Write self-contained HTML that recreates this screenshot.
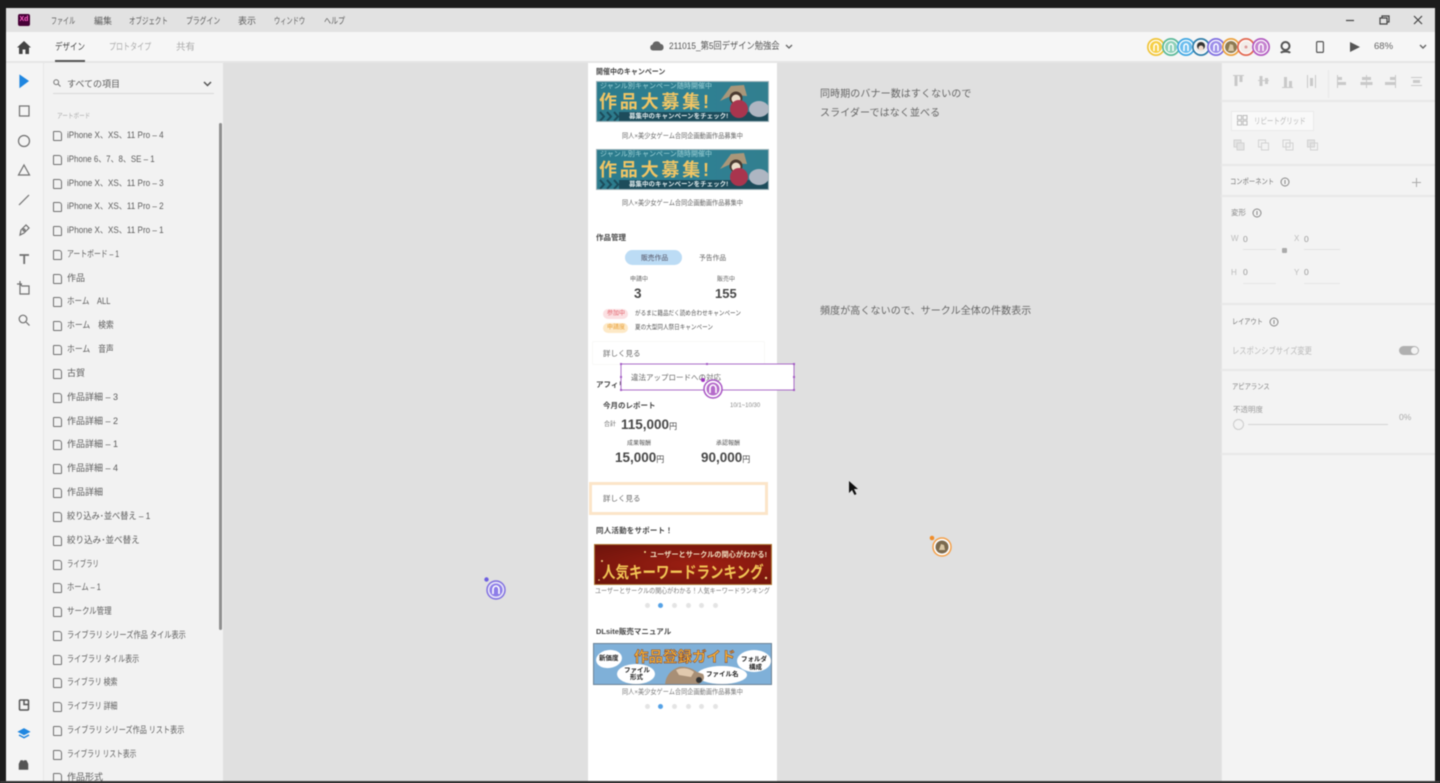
<!DOCTYPE html>
<html lang="ja"><head><meta charset="utf-8">
<style>
*{box-sizing:border-box}
html,body{margin:0;padding:0;width:1440px;height:783px;overflow:hidden;background:#1c1c1c}
body{font-family:"Liberation Sans","Noto Sans CJK JP",sans-serif;color:#5c5c5c}
#w{position:absolute;left:0;top:0;width:1440px;height:783px;overflow:hidden;filter:blur(.5px)}
.a{position:absolute}
.t{position:absolute;white-space:nowrap;line-height:14px;height:14px;transform-origin:left center}
.li{position:absolute;left:67px;font-size:9px;line-height:14px;color:#5c5c5c;white-space:nowrap}
.li:before{content:"";position:absolute;left:-14px;top:3px;width:7px;height:8px;border:1px solid #707070;border-top-right-radius:3px;border-radius:1px 3px 1px 1px}
.li u{display:inline-block;text-decoration:none;transform-origin:left center}
.b{font-weight:700;color:#484848}
svg{position:absolute;overflow:visible}
.dots{position:absolute;height:5px}
.dots i{position:absolute;top:0;width:5px;height:5px;border-radius:50%;background:#e4e4e4}
.dots i.on{background:#56a2e6}
.hl{position:absolute;height:2px;background:#e8e8e8;left:1221px;width:214px}
.banner{position:absolute;left:596px;width:173px;height:41px;background:linear-gradient(90deg,#2c7b8c,#2f8093 60%,#327f8f);overflow:hidden;border:1px solid #9fb4bb}
.banner .top{position:absolute;left:3px;top:0;font-size:7px;line-height:10px;letter-spacing:.05px;color:#9fd3d8;white-space:nowrap}
.banner .big{position:absolute;left:2px;top:9px;font-size:18px;line-height:22px;font-weight:700;letter-spacing:2.8px;color:#efc565;white-space:nowrap}
.banner .bar{position:absolute;left:22px;bottom:0;width:151px;height:9px;background:#1d4c5b}
.banner .chev{position:absolute;left:1px;bottom:0;width:24px;height:9px}
.banner .sub{position:absolute;left:32px;bottom:0;font-size:6.500px;line-height:9px;color:#dfeaec;font-weight:700;white-space:nowrap}
.banner .girl{position:absolute;left:122px;top:1px;width:50px;height:38px}
</style></head><body><div id="w">

<!-- chrome -->
<div class="a" style="left:6px;top:8px;width:1429px;height:24px;background:#e2e2e2"></div>
<div class="a" style="left:6px;top:32px;width:1429px;height:30px;background:#f6f6f6"></div>
<div class="a" style="left:6px;top:61px;width:1429px;height:2px;background:#e6e6e6"></div>
<div class="a" style="left:6px;top:63px;width:37px;height:718px;background:#f4f4f4"></div>
<div class="a" style="left:43px;top:63px;width:180px;height:718px;background:#f2f2f2;border-left:1px solid #e6e6e6"></div>
<div class="a" style="left:223px;top:63px;width:998px;height:718px;background:#e0e0e0"></div>
<div class="a" style="left:1221px;top:63px;width:214px;height:718px;background:#f3f3f3"></div>

<!-- title bar -->
<div class="a" style="left:18px;top:14px;width:12px;height:12px;background:#470137;border-radius:2px;color:#ff61c8;font-size:7px;line-height:12px;text-align:center;font-weight:700">Xd</div>
<span class="t" style="left:51px;top:14px;font-size:9px;transform:scaleX(.67)">ファイル</span>
<span class="t" style="left:94px;top:14px;font-size:9px">編集</span>
<span class="t" style="left:129px;top:14px;font-size:9px;transform:scaleX(.72)">オブジェクト</span>
<span class="t" style="left:186px;top:14px;font-size:9px;transform:scaleX(.76)">プラグイン</span>
<span class="t" style="left:238px;top:14px;font-size:9px">表示</span>
<span class="t" style="left:274px;top:14px;font-size:9px;transform:scaleX(.69)">ウィンドウ</span>
<span class="t" style="left:324px;top:14px;font-size:9px;transform:scaleX(.78)">ヘルプ</span>
<svg style="left:1340px;top:12px" width="90" height="16" fill="none" stroke="#444" stroke-width="1.200"><path d="M6 8.500h8"/><path d="M40 6h7v6h-7zM42 6V4h7v6h-2"/><path d="M74 4l8 8M82 4l-8 8"/></svg>

<!-- tool bar -->
<svg style="left:17px;top:41px" width="14" height="13" fill="#444"><path d="M7 0L0 6.500h2V13h3.600V8.500h2.800V13H12V6.500h2z"/></svg>
<span class="t" style="left:55px;top:41px;font-size:9.500px;color:#444;transform:scaleX(.79)">デザイン</span>
<div class="a" style="left:55px;top:60px;width:30px;height:2px;background:#555"></div>
<span class="t" style="left:109px;top:41px;font-size:9.500px;color:#aaa;transform:scaleX(.74)">プロトタイプ</span>
<span class="t" style="left:176px;top:41px;font-size:9.500px;color:#aaa">共有</span>
<svg style="left:650px;top:41px" width="14" height="10" fill="#666"><path d="M3 9.500a3 3 0 0 1-.5-5.900A4.300 4.300 0 0 1 10.600 3 3.300 3.300 0 0 1 11 9.500z"/></svg>
<span class="t" style="left:669px;top:40px;font-size:9.500px;color:#555;transform:scaleX(.87)">211015_第5回デザイン勉強会</span>
<svg style="left:785px;top:44px" width="8" height="6" fill="none" stroke="#666" stroke-width="1.300"><path d="M1 1l3 3 3-3"/></svg>

<!-- collaborators -->
<svg style="left:1146px;top:37px" width="126" height="20" viewBox="0 0 126 20">
 <g stroke="none">
  <circle cx="10" cy="10" r="9" fill="#f0c437"/><circle cx="10" cy="10" r="7.300" fill="#fff"/><circle cx="10" cy="10" r="6" fill="#f6cf45"/>
  <circle cx="25" cy="10" r="9" fill="#59b897"/><circle cx="25" cy="10" r="7.300" fill="#fff"/><circle cx="25" cy="10" r="6" fill="#8dd0b8"/>
  <circle cx="40" cy="10" r="9" fill="#3fa6e2"/><circle cx="40" cy="10" r="7.300" fill="#fff"/><circle cx="40" cy="10" r="6" fill="#6bbdee"/>
  <circle cx="55" cy="10" r="9" fill="#2f7da8"/><circle cx="55" cy="10" r="7.300" fill="#fff"/><circle cx="55" cy="10" r="6" fill="#eee"/>
  <circle cx="70" cy="10" r="9" fill="#7e6de0"/><circle cx="70" cy="10" r="7.300" fill="#fff"/><circle cx="70" cy="10" r="6" fill="#9c8eea"/>
  <circle cx="85" cy="10" r="9" fill="#eba13d"/><circle cx="85" cy="10" r="7.300" fill="#fff"/><circle cx="85" cy="10" r="6" fill="#8d7a52"/>
  <circle cx="100" cy="10" r="9" fill="#e2674f"/><circle cx="100" cy="10" r="7.300" fill="#fff"/><circle cx="100" cy="10" r="6" fill="#f3ece8"/>
  <circle cx="115" cy="10" r="9" fill="#b25ac0"/><circle cx="115" cy="10" r="7.300" fill="#fff"/><circle cx="115" cy="10" r="6" fill="#c583d0"/>
 </g>
 <g fill="none" stroke="#fff" stroke-width="1.500">
  <path d="M8 14v-4.500a2 2.500 0 0 1 4 0V14"/><path d="M23 14v-4.500a2 2.500 0 0 1 4 0V14"/><path d="M38 14v-4.500a2 2.500 0 0 1 4 0V14"/><path d="M68 14v-4.500a2 2.500 0 0 1 4 0V14"/><path d="M113 14v-4.500a2 2.500 0 0 1 4 0V14"/>
 </g>
 <circle cx="55" cy="9" r="4" fill="#333"/><circle cx="55" cy="11" r="2.500" fill="#f1d9c8"/>
 <path d="M82 14l2-7 3 1 1 6z" fill="#d9c7a5"/><circle cx="100" cy="10" r="1.500" fill="#d99"/>
</svg>
<svg style="left:1279px;top:40px" width="14" height="14" fill="none" stroke="#555" stroke-width="2"><circle cx="6.500" cy="6" r="4"/><path d="M2 13c1-2 8-2 9 0"/></svg>
<svg style="left:1316px;top:41px" width="8" height="12" fill="none" stroke="#555" stroke-width="1.200"><rect x=".6" y=".6" width="6.800" height="10.800" rx="1.200"/></svg>
<svg style="left:1350px;top:41px" width="10" height="12" fill="#555"><path d="M0 1l10 5-10 5z"/></svg>
<span class="t" style="left:1374px;top:40px;font-size:9.500px;color:#666">68%</span>
<svg style="left:1419px;top:44px" width="8" height="6" fill="none" stroke="#666" stroke-width="1.400"><path d="M1 1l3 3 3-3"/></svg>

<!-- tool rail -->
<svg style="left:14px;top:70px" width="20" height="270" fill="none" stroke="#707070" stroke-width="1.200">
 <path d="M6 5.500l8 5.500-8 6z" fill="#1f86e0" stroke="#1f86e0"/>
 <rect x="5.500" y="36" width="9.500" height="10" />
 <circle cx="10" cy="71" r="5.500"/>
 <path d="M10 95l5.500 10h-11z"/>
 <path d="M5 135l10-10"/>
 <path d="M6 165l1-5 5-5 3 3-5 5z"/><circle cx="10" cy="160" r="1"/>
 <path d="M5.500 185h9.500M10.200 185v9" stroke-width="1.800"/>
 <path d="M6 214v10h9v-8h-7zM3 214h5M6 211v5"/>
 <circle cx="9" cy="249" r="3.800"/><path d="M12 252l3.500 3.500"/>
</svg>
<svg style="left:16px;top:697px" width="16" height="75" fill="none" stroke="#555" stroke-width="1.500">
 <rect x="3.500" y="3" width="9" height="10" rx="1"/><path d="M8 3v4.500h4.500" />
 <path d="M8 32l5 2.700-5 2.700-5-2.700z" fill="#1f86e0" stroke="#1f86e0"/><path d="M3 38l5 2.700 5-2.700" stroke="#1f86e0"/>
 <path d="M3.500 72v-5l1.500-3h1.500l1 2 1-2h1.500l1.500 3v5z" fill="#555"/>
</svg>

<!-- left panel -->
<svg style="left:53px;top:79px" width="8" height="8" fill="none" stroke="#777"><circle cx="3.200" cy="3.200" r="2.400"/><path d="M5 5l2.500 2.500"/></svg>
<span class="t" style="left:67px;top:77px;font-size:9px">すべての項目</span>
<svg style="left:203px;top:81px" width="9" height="6" fill="none" stroke="#555" stroke-width="1.500"><path d="M1 1l3.500 3.500L8 1"/></svg>
<div class="a" style="left:53px;top:93px;width:161px;height:1px;background:#d8d8d8"></div>
<span class="t" style="left:57px;top:110px;font-size:7px;color:#aaa;transform:scaleX(.8)">アートボード</span>
<div class="a" style="left:219px;top:123px;width:3px;height:507px;background:#8f8f8f;border-radius:2px"></div>

<span class="li" style="top:128px"><u style="transform:scaleX(.9)">iPhone X、XS、11 Pro – 4</u></span>
<span class="li" style="top:152px"><u style="transform:scaleX(.88)">iPhone 6、7、8、SE – 1</u></span>
<span class="li" style="top:176px"><u style="transform:scaleX(.9)">iPhone X、XS、11 Pro – 3</u></span>
<span class="li" style="top:199px"><u style="transform:scaleX(.9)">iPhone X、XS、11 Pro – 2</u></span>
<span class="li" style="top:223px"><u style="transform:scaleX(.9)">iPhone X、XS、11 Pro – 1</u></span>
<span class="li" style="top:247px"><u style="transform:scaleX(.76)">アートボード – 1</u></span>
<span class="li" style="top:271px">作品</span>
<span class="li" style="top:294px"><u style="transform:scaleX(.84)">ホーム　ALL</u></span>
<span class="li" style="top:318px"><u style="transform:scaleX(.87)">ホーム　検索</u></span>
<span class="li" style="top:342px"><u style="transform:scaleX(.87)">ホーム　音声</u></span>
<span class="li" style="top:366px">古賀</span>
<span class="li" style="top:390px">作品詳細 – 3</span>
<span class="li" style="top:414px">作品詳細 – 2</span>
<span class="li" style="top:437px">作品詳細 – 1</span>
<span class="li" style="top:461px">作品詳細 – 4</span>
<span class="li" style="top:485px">作品詳細</span>
<span class="li" style="top:509px"><u style="transform:scaleX(.91)">絞り込み･並べ替え – 1</u></span>
<span class="li" style="top:533px"><u style="transform:scaleX(.95)">絞り込み･並べ替え</u></span>
<span class="li" style="top:557px"><u style="transform:scaleX(.71)">ライブラリ</u></span>
<span class="li" style="top:580px"><u style="transform:scaleX(.81)">ホーム – 1</u></span>
<span class="li" style="top:604px"><u style="transform:scaleX(.83)">サークル管理</u></span>
<span class="li" style="top:628px"><u style="transform:scaleX(.8)">ライブラリ シリーズ作品 タイル表示</u></span>
<span class="li" style="top:652px"><u style="transform:scaleX(.78)">ライブラリ タイル表示</u></span>
<span class="li" style="top:675px"><u style="transform:scaleX(.77)">ライブラリ 検索</u></span>
<span class="li" style="top:699px"><u style="transform:scaleX(.77)">ライブラリ 詳細</u></span>
<span class="li" style="top:723px"><u style="transform:scaleX(.79)">ライブラリ シリーズ作品 リスト表示</u></span>
<span class="li" style="top:747px"><u style="transform:scaleX(.75)">ライブラリ リスト表示</u></span>
<span class="li" style="top:770px">作品形式</span>

<!-- artboard -->
<div class="a" style="left:588px;top:63px;width:189px;height:718px;background:#fff"></div>

<span class="t b" style="left:596px;top:65px;font-size:7.500px;transform:scaleX(.93)">開催中のキャンペーン</span>
<div class="banner" style="top:81px">
 <span class="top">ジャンル別キャンペーン随時開催中</span>
 <span class="big">作品大募集!</span>
 <svg class="chev" viewBox="0 0 24 9" fill="none" stroke="#1d4c5b" stroke-width="2"><path d="M2 0l4 4.500L2 9M9 0l4 4.500L9 9M16 0l4 4.500L16 9"/></svg>
 <div class="bar"></div><span class="sub">募集中のキャンペーンをチェック!</span>
 <svg class="girl" viewBox="0 0 50 38"><path d="M1 18L12 3l13-1 3 11-14-1z" fill="#a9977a"/><circle cx="17" cy="15" r="6.500" fill="#4a3a30"/><circle cx="17" cy="16" r="4.500" fill="#eadcc8"/><circle cx="20" cy="26" r="9" fill="#a9354e"/><ellipse cx="40" cy="26" rx="10" ry="8" fill="#aeb6c2"/></svg>
</div>
<span class="t" style="left:622px;top:130px;font-size:6.800px;color:#666;transform:scaleX(.91)">同人×美少女ゲーム合同企画動画作品募集中</span>
<div class="banner" style="top:149px">
 <span class="top">ジャンル別キャンペーン随時開催中</span>
 <span class="big">作品大募集!</span>
 <svg class="chev" viewBox="0 0 24 9" fill="none" stroke="#1d4c5b" stroke-width="2"><path d="M2 0l4 4.500L2 9M9 0l4 4.500L9 9M16 0l4 4.500L16 9"/></svg>
 <div class="bar"></div><span class="sub">募集中のキャンペーンをチェック!</span>
 <svg class="girl" viewBox="0 0 50 38"><path d="M1 18L12 3l13-1 3 11-14-1z" fill="#a9977a"/><circle cx="17" cy="15" r="6.500" fill="#4a3a30"/><circle cx="17" cy="16" r="4.500" fill="#eadcc8"/><circle cx="20" cy="26" r="9" fill="#a9354e"/><ellipse cx="40" cy="26" rx="10" ry="8" fill="#aeb6c2"/></svg>
</div>
<span class="t" style="left:622px;top:197px;font-size:6.800px;color:#666;transform:scaleX(.91)">同人×美少女ゲーム合同企画動画作品募集中</span>

<span class="t b" style="left:596px;top:231px;font-size:7.500px">作品管理</span>
<div class="a" style="left:625px;top:250px;width:57px;height:15px;border-radius:8px;background:#bcdcf5"></div>
<span class="t" style="left:641px;top:252px;font-size:6.800px;color:#556">販売作品</span>
<span class="t" style="left:699px;top:252px;font-size:6.800px;color:#666">予告作品</span>
<span class="t" style="left:630px;top:273px;font-size:6px;color:#666">申請中</span>
<span class="t" style="left:717px;top:273px;font-size:6px;color:#666">販売中</span>
<span class="t b" style="left:634px;top:287px;font-size:13.500px">3</span>
<span class="t b" style="left:715px;top:287px;font-size:13px">155</span>
<div class="a" style="left:603px;top:309px;width:25px;height:10px;border-radius:5px;background:#fbe0e2"></div>
<span class="t" style="left:607px;top:307px;font-size:6px;color:#e2606a">参加中</span>
<span class="t" style="left:635px;top:307px;font-size:6.500px;color:#555;transform:scaleX(.86)">がるまに籍品だく読め合わせキャンペーン</span>
<div class="a" style="left:603px;top:323px;width:25px;height:10px;border-radius:5px;background:#fde9c7"></div>
<span class="t" style="left:607px;top:321px;font-size:6px;color:#e9a13a">申請度</span>
<span class="t" style="left:635px;top:321px;font-size:6.500px;color:#555;transform:scaleX(.86)">夏の大型同人祭日キャンペーン</span>
<div class="a" style="left:592px;top:341px;width:173px;height:24px;border:1px solid #f8f8f6;border-radius:2px"></div>
<span class="t" style="left:603px;top:347px;font-size:7.500px;color:#666">詳しく見る</span>
<span class="t b" style="left:596px;top:378px;font-size:7.500px">アフィリエイト</span>

<!-- selection -->
<div class="a" style="left:621px;top:364px;width:173px;height:26px;background:#fff"></div>
<span class="t" style="left:631px;top:371px;font-size:7.500px;color:#666">違法アップロードへの対応</span>
<svg style="left:618px;top:361px" width="180" height="36" fill="none">
 <rect x="3" y="3" width="173" height="26" stroke="#a35cc4" stroke-width=".9"/>
 <g fill="#a35cc4"><rect x="2" y="2" width="2" height="2"/><rect x="88" y="2" width="2" height="2"/><rect x="175" y="2" width="2" height="2"/><rect x="2" y="15" width="2" height="2"/><rect x="175" y="15" width="2" height="2"/><rect x="2" y="28" width="2" height="2"/><rect x="175" y="28" width="2" height="2"/></g>
 <circle cx="85" cy="19" r="2" fill="#a035c0"/>
 <circle cx="95" cy="28" r="9" fill="#fff" stroke="#a855c4" stroke-width="1.500"/>
 <circle cx="95" cy="28" r="6.500" fill="#b56bca"/>
 <path d="M92 32v-4.500a3 3.500 0 0 1 6 0V32" stroke="#fff" stroke-width="1.600"/>
</svg>

<span class="t b" style="left:603px;top:399px;font-size:7.500px">今月のレポート</span>
<span class="t" style="left:730px;top:399px;font-size:6px;color:#888">10/1~10/30</span>
<span class="t" style="left:604px;top:418px;font-size:6px;color:#666">合計</span>
<span class="t b" style="left:621px;top:418px;font-size:13.500px">115,000<span style="font-size:8px;font-weight:400">円</span></span>
<span class="t" style="left:627px;top:437px;font-size:6px;color:#555">成果報酬</span>
<span class="t" style="left:716px;top:437px;font-size:6px;color:#555">承認報酬</span>
<span class="t b" style="left:615px;top:451px;font-size:13.500px">15,000<span style="font-size:8px;font-weight:400">円</span></span>
<span class="t b" style="left:701px;top:451px;font-size:13.500px">90,000<span style="font-size:8px;font-weight:400">円</span></span>
<div class="a" style="left:589px;top:482px;width:179px;height:33px;border:3px solid #fce5c8"></div>
<span class="t" style="left:603px;top:492px;font-size:7.500px;color:#666">詳しく見る</span>

<span class="t b" style="left:596px;top:524px;font-size:7.500px;letter-spacing:.2px">同人活動をサポート！</span>
<div class="a" style="left:594px;top:544px;width:178px;height:41px;background:radial-gradient(ellipse at 60% 50%,#9d1f12,#6d140c);border:1px solid #b07a35;overflow:hidden">
 <span class="t" style="right:4px;top:3px;font-size:7.200px;font-weight:700;color:#f0dfc0">ユーザーとサークルの関心がわかる!</span>
 <span class="t" style="left:7px;top:17px;height:22px;line-height:22px;font-size:13.500px;font-weight:700;color:#f2c555;transform:scaleY(1.2)">人気キーワードランキング</span>
 <svg class="a" style="left:0;top:0" width="178" height="41" fill="#f6d98a"><circle cx="7" cy="16" r="1"/><circle cx="171" cy="33" r="1.200"/><circle cx="50" cy="7" r="1"/><circle cx="163" cy="21" r=".8"/><circle cx="4" cy="35" r=".8"/></svg>
</div>
<span class="t" style="left:595px;top:585px;font-size:6.800px;color:#777;transform:scaleX(.89)">ユーザーとサークルの関心がわかる！人気キーワードランキング</span>
<div class="dots" style="left:645px;top:603px;width:80px"><i style="left:0"></i><i class="on" style="left:13px"></i><i style="left:27px"></i><i style="left:41px"></i><i style="left:54px"></i><i style="left:68px"></i></div>

<span class="t b" style="left:596px;top:625px;font-size:7.500px">DLsite販売マニュアル</span>
<div class="a" style="left:593px;top:643px;width:179px;height:42px;background:#7fb0d8;border:1px solid #6d8397;overflow:hidden">
 <svg class="a" style="left:0;top:0" width="179" height="42">
  <ellipse cx="15" cy="15" rx="13" ry="9" fill="#fff" transform="rotate(-8 15 15)"/><ellipse cx="42" cy="30" rx="19" ry="10" fill="#fff"/><ellipse cx="128" cy="31" rx="25" ry="9" fill="#fff"/><ellipse cx="160" cy="17" rx="17" ry="11" fill="#fff"/>
  <path d="M71 42c0-9 5-16 14-19 8-1 14 2 18 5l6 2c2 3 1 7-3 9l-3 3z" fill="#a88f76"/>
  <path d="M82 26c6-3 13-2 18 2l-3 5-12-2z" fill="#e1c9ae"/><circle cx="105" cy="36" r="3" fill="#333"/>
 </svg>
 <span class="t" style="left:40px;top:3px;height:22px;line-height:22px;font-size:14.500px;font-weight:700;color:#f3b23c;-webkit-text-stroke:.4px #7a2a10">作品登録ガイド</span>
 <span class="t" style="left:5px;top:8px;font-size:6.500px;font-weight:700;color:#222">新価度</span>
 <span class="t" style="left:30px;top:20px;font-size:6.500px;font-weight:700;color:#222">ファイル</span>
 <span class="t" style="left:36px;top:27px;font-size:6.500px;font-weight:700;color:#222">形式</span>
 <span class="t" style="left:112px;top:24px;font-size:6.500px;font-weight:700;color:#222">ファイル名</span>
 <span class="t" style="left:147px;top:9px;font-size:6.500px;font-weight:700;color:#222">フォルダ</span>
 <span class="t" style="left:155px;top:17px;font-size:6.500px;font-weight:700;color:#222">構成</span>
</div>
<span class="t" style="left:622px;top:686px;font-size:6.800px;color:#777;transform:scaleX(.91)">同人×美少女ゲーム合同企画動画作品募集中</span>
<div class="dots" style="left:645px;top:704px;width:80px"><i style="left:0"></i><i class="on" style="left:13px"></i><i style="left:27px"></i><i style="left:41px"></i><i style="left:54px"></i><i style="left:68px"></i></div>

<!-- canvas notes -->
<span class="t" style="left:820px;top:88px;font-size:10px;color:#666;letter-spacing:.1px">同時期のバナー数はすくないので</span>
<span class="t" style="left:820px;top:107px;font-size:10px;color:#666;letter-spacing:.1px">スライダーではなく並べる</span>
<span class="t" style="left:820px;top:305px;font-size:10px;color:#666;letter-spacing:.1px">頻度が高くないので、サークル全体の件数表示</span>

<!-- cursors -->
<svg style="left:848px;top:480px" width="12" height="17"><path d="M1 1v12l3-3 2.500 5 2-1-2.500-5H10z" fill="#111"/></svg>
<svg style="left:482px;top:574px" width="30" height="30" fill="none">
 <circle cx="4.500" cy="5.500" r="2.200" fill="#6d5fe0"/>
 <circle cx="14" cy="16" r="9" fill="#e6e3f7" stroke="#7e6de0" stroke-width="1.400"/>
 <circle cx="14" cy="16" r="6.500" fill="#8d7de8"/>
 <path d="M11 20v-4.500a3 3.500 0 0 1 6 0V20" stroke="#fff" stroke-width="1.600"/>
</svg>
<svg style="left:927px;top:533px" width="30" height="30" fill="none">
 <circle cx="5" cy="5" r="2.300" fill="#f08d2a"/>
 <circle cx="15" cy="14" r="9" fill="#fff" stroke="#f3a04a" stroke-width="1.500"/>
 <circle cx="15" cy="14" r="6.500" fill="#7b6a4e"/>
 <path d="M12 17l2-6 3 1 1 5z" fill="#d9c7a5"/>
</svg>

<!-- right panel -->
<div class="a" style="left:1221px;top:63px;width:1px;height:718px;background:#e4e4e4"></div>
<svg style="left:1232px;top:74px" width="195" height="16" fill="#c9c9c9" stroke="none">
 <path d="M1 1h11v1H1z"/><rect x="2.500" y="2" width="3" height="10"/><rect x="7.500" y="2" width="3" height="6"/>
 <path d="M26 6h11v1H26z"/><rect x="27.500" y="2" width="3" height="10"/><rect x="33" y="4" width="3" height="6"/>
 <path d="M50 13h11v1H50z"/><rect x="52" y="3" width="3" height="10"/><rect x="57" y="7" width="3" height="6"/>
 <path d="M75 1h1v13h-1zM83 1h1v13h-1z"/><rect x="78" y="4" width="3" height="8"/>
 <path d="M105 1h1v13h-1z"/><rect x="106" y="3" width="4" height="3"/><rect x="106" y="8" width="8" height="3"/>
 <path d="M134 1h1v13h-1z"/><rect x="130" y="3" width="9" height="3"/><rect x="128.500" y="8" width="12" height="3"/>
 <path d="M163 1h1v13h-1z"/><rect x="158" y="3" width="5" height="3"/><rect x="153" y="8" width="10" height="3"/>
 <path d="M179 3h11v1h-11zM179 11h11v1h-11z"/><rect x="181" y="6" width="7" height="3"/>
</svg>
<div class="a" style="left:1328px;top:70px;width:1px;height:28px;background:#e8e8e8"></div>
<div class="hl" style="top:100px"></div>
<div class="a" style="left:1231px;top:111px;width:83px;height:20px;background:#f9f9f9;border:1px solid #eaeaea"></div>
<svg style="left:1237px;top:115px" width="11" height="11" fill="none" stroke="#bbb"><rect x=".5" y=".5" width="4" height="4"/><rect x="6" y=".5" width="4" height="4"/><rect x=".5" y="6" width="4" height="4"/><rect x="6" y="6" width="4" height="4"/></svg>
<span class="t" style="left:1254px;top:114px;font-size:8.500px;color:#bbb;transform:scaleX(.76)">リピートグリッド</span>
<svg style="left:1233px;top:139px" width="90" height="14" fill="none" stroke="#d2d2d2">
 <rect x="1" y="1" width="7" height="7" fill="#e4e4e4"/><rect x="4" y="4" width="7" height="7" fill="#e4e4e4"/>
 <rect x="25.500" y="1" width="7" height="7"/><rect x="28.500" y="4" width="7" height="7" fill="#f3f3f3"/>
 <rect x="50" y="1" width="7" height="7"/><rect x="53" y="4" width="7" height="7"/>
 <rect x="74.500" y="1" width="7" height="7" fill="#e4e4e4"/><rect x="77.500" y="4" width="7" height="7"/>
</svg>
<div class="hl" style="top:164px"></div>
<span class="t" style="left:1230px;top:175px;font-size:7.500px;color:#777;transform:scaleX(.84)">コンポーネント</span>
<svg style="left:1280px;top:177px" width="10" height="10" fill="none" stroke="#888"><circle cx="5" cy="5" r="4"/><path d="M5 3v4"/></svg>
<svg style="left:1412px;top:178px" width="9" height="9" stroke="#aaa"><path d="M4.500 0v9M0 4.500h9"/></svg>
<div class="hl" style="top:195px"></div>
<span class="t" style="left:1231px;top:206px;font-size:7.500px;color:#888">変形</span>
<svg style="left:1252px;top:208px" width="10" height="10" fill="none" stroke="#888"><circle cx="5" cy="5" r="4"/><path d="M5 3v4"/></svg>
<span class="t" style="left:1231px;top:232px;font-size:8px;color:#bbb">W</span>
<span class="t" style="left:1243px;top:232px;font-size:8.500px;color:#999">0</span>
<span class="t" style="left:1294px;top:232px;font-size:8px;color:#bbb">X</span>
<span class="t" style="left:1304px;top:232px;font-size:8.500px;color:#999">0</span>
<span class="t" style="left:1231px;top:266px;font-size:8px;color:#bbb">H</span>
<span class="t" style="left:1243px;top:265px;font-size:8.500px;color:#999">0</span>
<span class="t" style="left:1294px;top:266px;font-size:8px;color:#bbb">Y</span>
<span class="t" style="left:1304px;top:265px;font-size:8.500px;color:#999">0</span>
<div class="a" style="left:1243px;top:249px;width:33px;height:1px;background:#e2e2e2"></div>
<div class="a" style="left:1304px;top:249px;width:36px;height:1px;background:#e2e2e2"></div>
<div class="a" style="left:1243px;top:283px;width:33px;height:1px;background:#e6e6e6"></div>
<div class="a" style="left:1304px;top:283px;width:36px;height:1px;background:#e6e6e6"></div>
<div class="a" style="left:1282px;top:248px;width:5px;height:5px;background:#aaa;border-radius:1px"></div>
<div class="hl" style="top:303px"></div>
<span class="t" style="left:1232px;top:315px;font-size:7.500px;color:#777;transform:scaleX(.82)">レイアウト</span>
<svg style="left:1269px;top:317px" width="10" height="10" fill="none" stroke="#888"><circle cx="5" cy="5" r="4"/><path d="M5 3v4"/></svg>
<span class="t" style="left:1232px;top:344px;font-size:9px;color:#bbb;transform:scaleX(.81)">レスポンシブサイズ変更</span>
<div class="a" style="left:1399px;top:346px;width:20px;height:9px;background:#b0b0b0;border-radius:5px"></div>
<div class="a" style="left:1411px;top:347px;width:7px;height:7px;background:#f3f3f3;border-radius:50%"></div>
<div class="hl" style="top:369px"></div>
<span class="t" style="left:1232px;top:380px;font-size:7.500px;color:#888;transform:scaleX(.84)">アピアランス</span>
<span class="t" style="left:1233px;top:403px;font-size:7.500px;color:#999">不透明度</span>
<span class="t" style="left:1399px;top:410px;font-size:8.500px;color:#aaa">0%</span>
<div class="a" style="left:1233px;top:419px;width:11px;height:11px;border:1px solid #ccc;border-radius:50%;background:#f3f3f3"></div>
<div class="a" style="left:1248px;top:424px;width:140px;height:1px;background:#d4d4d4"></div>
<div class="hl" style="top:453px"></div>

<!-- frame edges -->
<div class="a" style="left:0;top:0;width:1440px;height:8px;background:#1c1c1c"></div>
<div class="a" style="left:0;top:0;width:6px;height:783px;background:#1c1c1c"></div>
<div class="a" style="left:1435px;top:0;width:5px;height:783px;background:#1c1c1c"></div>
<div class="a" style="left:0;top:781px;width:1440px;height:2px;background:#3a3a3a"></div>
</div></body></html>
